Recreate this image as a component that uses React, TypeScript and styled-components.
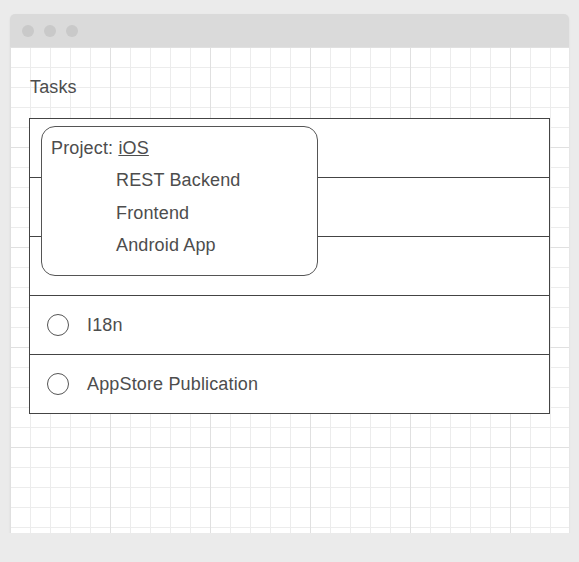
import React from 'react'
import styled, {createGlobalStyle} from 'styled-components'

const GlobalStyle = createGlobalStyle`
  html, body {
    margin: 0;
    padding: 0;
    background: #ebebeb;
  }
  body {
    font-family: 'Liberation Sans', Arial, sans-serif;
  }
`

const tasks = ['', '', '', 'I18n', 'AppStore Publication']
const projects = ['REST Backend', 'Frontend', 'Android App']

export default function App(): JSX.Element {
  return (
    <>
      <GlobalStyle />
      <Window>
        <TitleBar>
          <Dot />
          <Dot />
          <Dot />
        </TitleBar>

        <Canvas>
          <Title>Tasks</Title>

          <TaskTable>
            {tasks.map((name, i) => (
              <TaskRow key={i}>
                {name ? (
                  <>
                    <Radio />
                    <TaskName>{name}</TaskName>
                  </>
                ) : null}
              </TaskRow>
            ))}

            <ProjectMenu>
              <MenuHeader>
                Project: <Current>iOS</Current>
              </MenuHeader>
              {projects.map(p => (
                <MenuItem key={p}>{p}</MenuItem>
              ))}
            </ProjectMenu>
          </TaskTable>
        </Canvas>
      </Window>
    </>
  )
}

const TEXT = '#4d4d4d'

const Window = styled.div`
  margin: 14px 0 0 10px;
  width: 559px;
  height: 519px;
  display: flex;
  flex-direction: column;
  border-radius: 5px 5px 0 0;
  overflow: hidden;
  box-shadow: 0 1px 2px rgba(0, 0, 0, 0.08);
`

const TitleBar = styled.div`
  height: 33px;
  flex: none;
  display: flex;
  align-items: center;
  gap: 10px;
  padding-left: 12px;
  background: #dadada;
`

const Dot = styled.span`
  width: 12px;
  height: 12px;
  border-radius: 50%;
  background: #c9c9c9;
`

const Canvas = styled.div`
  flex: 1;
  padding: 30px 0 0 19px;
  background-color: #fff;
  background-image: linear-gradient(to right, #e0e0e0 1px, transparent 1px),
    linear-gradient(to bottom, #e0e0e0 1px, transparent 1px),
    linear-gradient(to right, #ececec 1px, transparent 1px),
    linear-gradient(to bottom, #ececec 1px, transparent 1px);
  background-size: 100px 100px, 100px 100px, 20px 20px, 20px 20px;
  font-size: 18px;
  letter-spacing: 0.15px;
  color: ${TEXT};
`

const Title = styled.div`
  margin-left: 1px;
  line-height: 20px;
`

const TaskTable = styled.div`
  position: relative;
  margin-top: 21px;
  width: 519px;
  border: 1px solid #444;
  background: #fff;
`

const TaskRow = styled.div`
  height: 58px;
  display: flex;
  align-items: center;
  padding-left: 17px;
  & + & {
    border-top: 1px solid #444;
  }
`

const Radio = styled.span`
  width: 20px;
  height: 20px;
  border: 1px solid #555;
  border-radius: 50%;
  flex: none;
`

const TaskName = styled.span`
  margin-left: 18px;
`

const ProjectMenu = styled.div`
  position: absolute;
  left: 11px;
  top: 7px;
  width: 275px;
  height: 148px;
  box-sizing: content-box;
  border: 1px solid #555;
  border-radius: 14px;
  background: #fff;
  display: flex;
  flex-direction: column;
`

const MenuHeader = styled.div`
  margin: 7.5px 0 0 9px;
  line-height: 26px;
`

const Current = styled.span`
  text-decoration: underline;
`

const MenuItem = styled.div`
  margin: 6.5px 0 0 74px;
  line-height: 26px;
`
